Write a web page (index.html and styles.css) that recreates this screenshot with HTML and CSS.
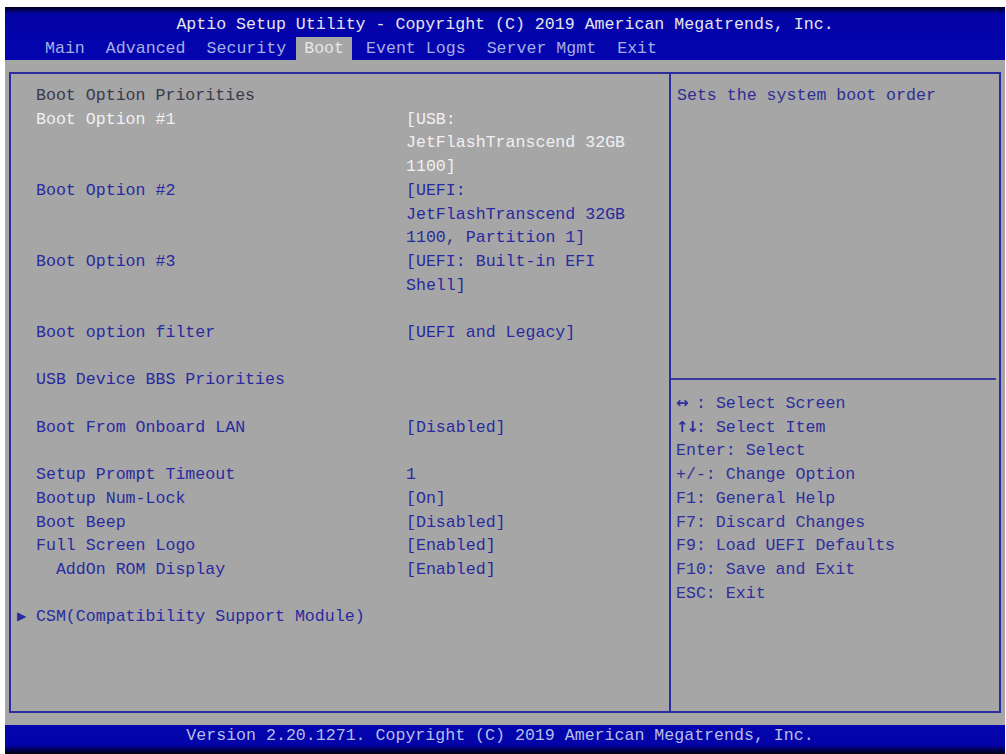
FILE: index.html
```html
<!DOCTYPE html>
<html lang="en">
<head>
  <meta charset="UTF-8">
  <title>Aptio Setup Utility - Boot</title>
  <link rel="stylesheet" href="styles.css">
</head>
<body>

  <div class="pantalla">

    <div class="cabecera">
      <div class="titulo">Aptio Setup Utility - Copyright (C) 2019 American Megatrends, Inc.</div>
      <div class="menu">
        <span>Main</span>
        <span>Advanced</span>
        <span>Security</span>
        <span class="activo">Boot</span>
        <span>Event Logs</span>
        <span>Server Mgmt</span>
        <span>Exit</span>
      </div>
    </div>

    <div class="marco">
      <div class="opciones">
        <div class="fila titulo-seccion"><span>Boot Option Priorities</span></div>
        <div class="fila sel">
          <span>Boot Option #1</span>
          <span>[USB:<br>JetFlashTranscend 32GB<br>1100]</span>
        </div>
        <div class="fila">
          <span>Boot Option #2</span>
          <span>[UEFI:<br>JetFlashTranscend 32GB<br>1100, Partition 1]</span>
        </div>
        <div class="fila">
          <span>Boot Option #3</span>
          <span>[UEFI: Built-in EFI<br>Shell]</span>
        </div>
        <div class="vacia"></div>
        <div class="fila">
          <span>Boot option filter</span>
          <span>[UEFI and Legacy]</span>
        </div>
        <div class="vacia"></div>
        <div class="fila"><span>USB Device BBS Priorities</span></div>
        <div class="vacia"></div>
        <div class="fila">
          <span>Boot From Onboard LAN</span>
          <span>[Disabled]</span>
        </div>
        <div class="vacia"></div>
        <div class="fila">
          <span>Setup Prompt Timeout</span>
          <span>1</span>
        </div>
        <div class="fila">
          <span>Bootup Num-Lock</span>
          <span>[On]</span>
        </div>
        <div class="fila">
          <span>Boot Beep</span>
          <span>[Disabled]</span>
        </div>
        <div class="fila">
          <span>Full Screen Logo</span>
          <span>[Enabled]</span>
        </div>
        <div class="fila">
          <span class="sangria">AddOn ROM Display</span>
          <span>[Enabled]</span>
        </div>
        <div class="vacia"></div>
        <div class="fila"><span><span class="flecha">&#9654;</span>CSM(Compatibility Support Module)</span></div>
      </div>

      <div class="ayuda">
        <div class="descripcion">Sets the system boot order</div>
        <div class="linea"></div>
        <div class="teclas">
          <div><span class="flechas">&#8596;</span>: Select Screen</div>
          <div><span class="flechas">&#8593;&#8595;</span>: Select Item</div>
          <div>Enter: Select</div>
          <div>+/-: Change Option</div>
          <div>F1: General Help</div>
          <div>F7: Discard Changes</div>
          <div>F9: Load UEFI Defaults</div>
          <div>F10: Save and Exit</div>
          <div>ESC: Exit</div>
        </div>
      </div>
    </div>

    <div class="pie">Version 2.20.1271. Copyright (C) 2019 American Megatrends, Inc.</div>

  </div>

</body>
</html>
```

FILE: styles.css
```css
body {
  margin: 0;
  background-color: #fff;
  font-family: 'Liberation Mono', 'DejaVu Sans Mono', monospace;
  font-size: 16.6px;
}

.pantalla {
  margin: 7px 1px 0 5px;
  height: 747px;
  background-color: #a6a6a6;
  display: flex;
  flex-direction: column;
}

.cabecera {
  height: 53px;
  box-sizing: border-box;
  padding-top: 6px;
  background: linear-gradient(#00001c 0, #0303a6 7px, #0505b0 100%);
}

.titulo {
  height: 24px;
  line-height: 24px;
  text-align: center;
  color: #e4e4ee;
}

.menu {
  display: flex;
  gap: 21px;
  padding-left: 40px;
  height: 23px;
  line-height: 23px;
  color: #a6aee6;
}

.menu .activo {
  background-color: #a6a6a6;
  color: #e6e6ea;
  padding: 0 8px;
  margin: 0 -7px 0 -11px;
}

.marco {
  margin: 12px 4px 0 4px;
  height: 641px;
  box-sizing: border-box;
  border: 2px solid #2c2c9c;
  display: flex;
}

.opciones {
  width: 660px;
  box-sizing: border-box;
  border-right: 2px solid #2c2c9c;
  padding: 10px 0 0 25px;
  color: #2a2aa0;
}

.fila {
  display: grid;
  grid-template-columns: 370px 1fr;
  line-height: 23.7px;
}

.vacia {
  height: 23.7px;
}

.titulo-seccion {
  color: #3a3a4c;
}

.sel {
  color: #f0f0f2;
}

.sangria {
  padding-left: 2ch;
}

.flecha {
  display: inline-block;
  width: 19px;
  margin-left: -19px;
  font-family: 'DejaVu Sans', sans-serif;
  font-size: 12px;
  vertical-align: 1px;
}

.ayuda {
  flex: 1;
  color: #2e2e9c;
}

.descripcion {
  height: 304px;
  box-sizing: border-box;
  padding: 10px 0 0 6px;
  line-height: 23.7px;
  color: #2e2e94;
}

.linea {
  height: 2px;
  margin-right: 3px;
  background-color: #3a3a9c;
}

.teclas {
  padding: 12px 0 0 5px;
  line-height: 23.7px;
}

.flechas {
  display: inline-block;
  width: 20px;
  font-family: 'DejaVu Sans', sans-serif;
  font-size: 15px;
  font-weight: bold;
  letter-spacing: -2px;
}

.pie {
  margin-top: 12px;
  height: 29px;
  line-height: 22px;
  padding-right: 10px;
  text-align: center;
  color: #b6bee8;
  background: linear-gradient(#0505b0 0, #0303a8 20px, #00000c 29px);
}
```
